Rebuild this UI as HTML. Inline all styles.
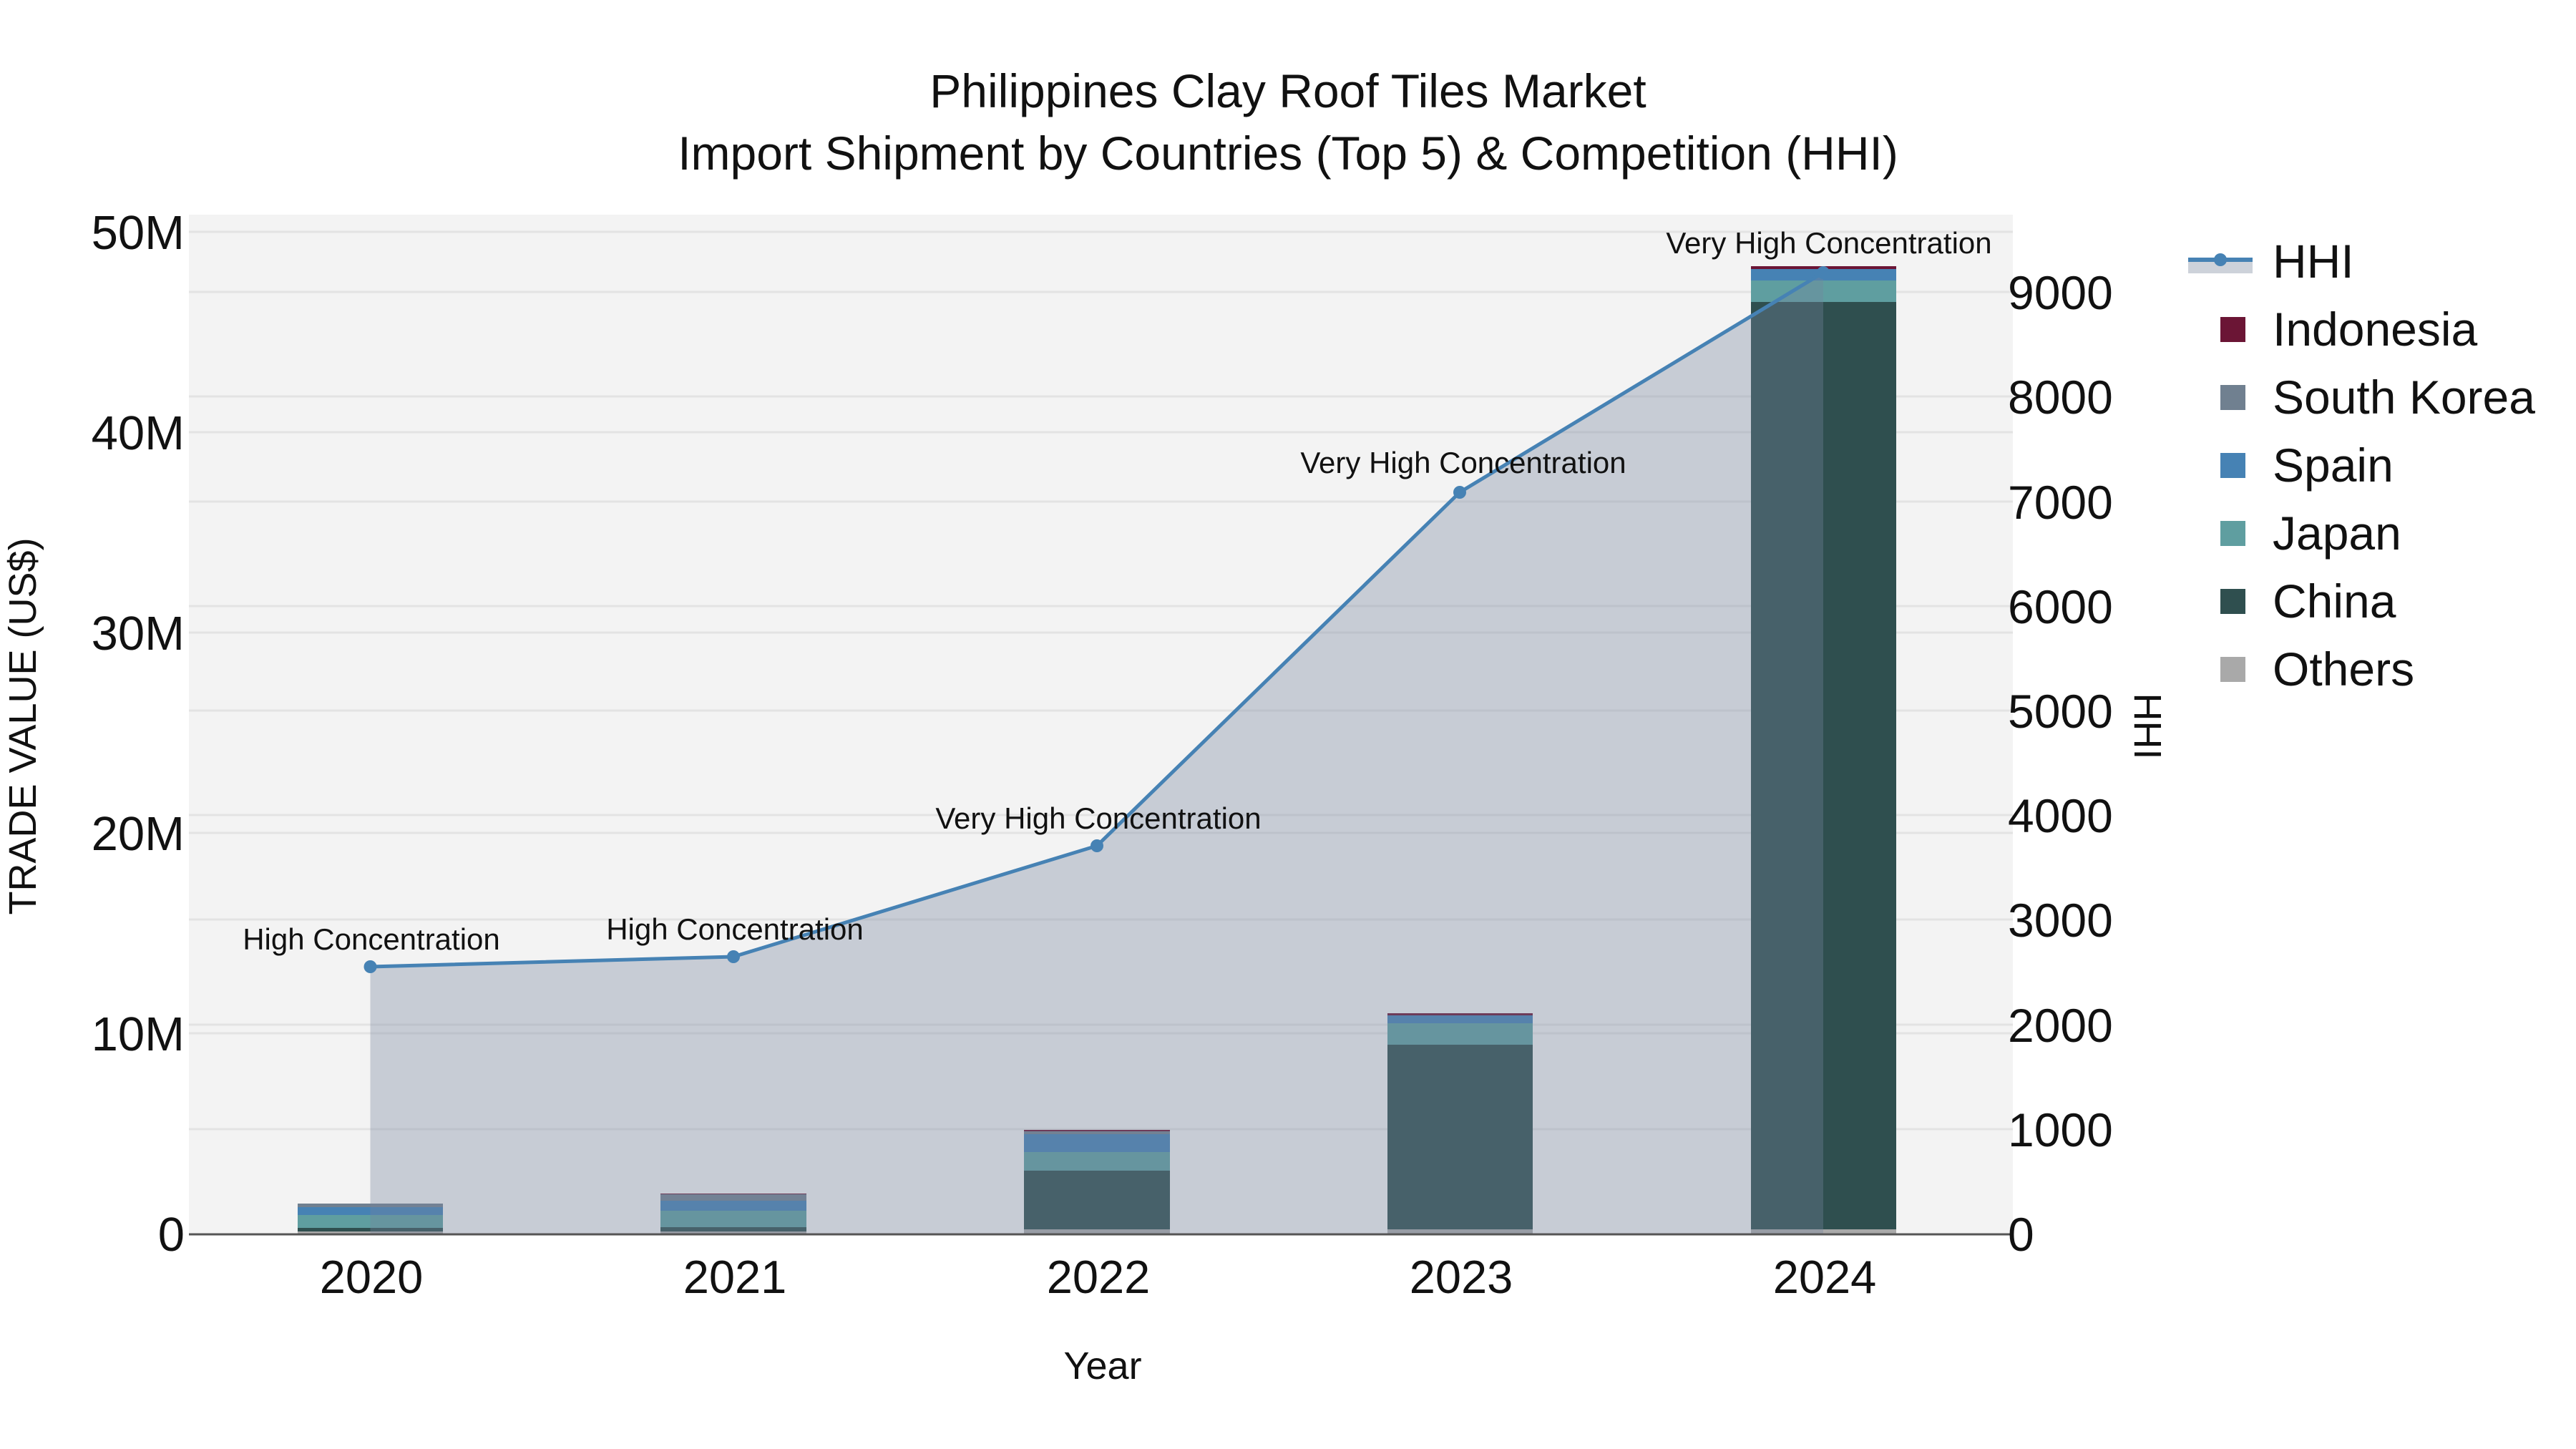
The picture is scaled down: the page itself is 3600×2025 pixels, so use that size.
<!DOCTYPE html>
<html><head><meta charset="utf-8"><style>html,body{margin:0;padding:0;background:#fff}svg{display:block}text{font-family:"Liberation Sans",sans-serif;fill:#111}</style></head>
<body>
<svg width="3600" height="2025" viewBox="0 0 3600 2025" xmlns="http://www.w3.org/2000/svg">
<rect width="3600" height="2025" fill="#fff"/>
<rect x="264" y="300" width="2549" height="1425" fill="#f3f3f3"/>
<g stroke="#e3e3e3" stroke-width="3">
<line x1="264" x2="2813" y1="1444" y2="1444"/><line x1="264" x2="2813" y1="1164" y2="1164"/><line x1="264" x2="2813" y1="884" y2="884"/><line x1="264" x2="2813" y1="604" y2="604"/><line x1="264" x2="2813" y1="324" y2="324"/>
<line x1="264" x2="2813" y1="1578" y2="1578"/><line x1="264" x2="2813" y1="1432" y2="1432"/><line x1="264" x2="2813" y1="1285" y2="1285"/><line x1="264" x2="2813" y1="1139" y2="1139"/><line x1="264" x2="2813" y1="993" y2="993"/><line x1="264" x2="2813" y1="847" y2="847"/><line x1="264" x2="2813" y1="701" y2="701"/><line x1="264" x2="2813" y1="554" y2="554"/><line x1="264" x2="2813" y1="408" y2="408"/>
</g>
<g>
<rect x="416" y="1682" width="203" height="5" fill="#708090"/>
<rect x="416" y="1687" width="203" height="11" fill="#4682b4"/>
<rect x="416" y="1698" width="203" height="18" fill="#5f9ea0"/>
<rect x="416" y="1716" width="203" height="5" fill="#2f4f4f"/>
<rect x="416" y="1721" width="203" height="4" fill="#a9a9a9"/>
<rect x="923" y="1668" width="204" height="1.5" fill="#6b1535"/>
<rect x="923" y="1669" width="204" height="9" fill="#708090"/>
<rect x="923" y="1678" width="204" height="14" fill="#4682b4"/>
<rect x="923" y="1692" width="204" height="23" fill="#5f9ea0"/>
<rect x="923" y="1715" width="204" height="6" fill="#2f4f4f"/>
<rect x="923" y="1721" width="204" height="4" fill="#a9a9a9"/>
<rect x="1431" y="1579" width="204" height="2" fill="#6b1535"/>
<rect x="1431" y="1581" width="204" height="4" fill="#708090"/>
<rect x="1431" y="1585" width="204" height="25" fill="#4682b4"/>
<rect x="1431" y="1610" width="204" height="26" fill="#5f9ea0"/>
<rect x="1431" y="1636" width="204" height="82" fill="#2f4f4f"/>
<rect x="1431" y="1718" width="204" height="7" fill="#a9a9a9"/>
<rect x="1939" y="1416" width="203" height="3" fill="#6b1535"/>
<rect x="1939" y="1419" width="203" height="11" fill="#4682b4"/>
<rect x="1939" y="1430" width="203" height="30" fill="#5f9ea0"/>
<rect x="1939" y="1460" width="203" height="258" fill="#2f4f4f"/>
<rect x="1939" y="1718" width="203" height="7" fill="#a9a9a9"/>
<rect x="2447" y="372" width="203" height="4" fill="#6b1535"/>
<rect x="2447" y="376" width="203" height="16" fill="#4682b4"/>
<rect x="2447" y="392" width="203" height="30" fill="#5f9ea0"/>
<rect x="2447" y="422" width="203" height="1296" fill="#2f4f4f"/>
<rect x="2447" y="1718" width="203" height="7" fill="#a9a9a9"/>
</g>
<polygon points="517.5,1351 1025,1337 1533,1182 2040,688 2548,381 2548,1724 517.5,1724" fill="rgb(118,133,158)" fill-opacity="0.35"/>
<line x1="264" x2="2813" y1="1725" y2="1725" stroke="#555" stroke-width="3"/>
<polyline points="517.5,1351 1025,1337 1533,1182 2040,688 2548,381" fill="none" stroke="#4682b4" stroke-width="5"/>
<g fill="#4682b4"><circle cx="517.5" cy="1351" r="9"/><circle cx="1025" cy="1337" r="9"/><circle cx="1533" cy="1182" r="9"/><circle cx="2040" cy="688" r="9"/><circle cx="2548" cy="381" r="9"/></g>
<g font-size="42" text-anchor="middle">
<text x="519" y="1327">High Concentration</text>
<text x="1027" y="1313">High Concentration</text>
<text x="1535" y="1158">Very High Concentration</text>
<text x="2045" y="661">Very High Concentration</text>
<text x="2556" y="354">Very High Concentration</text>
</g>
<g font-size="66" text-anchor="middle">
<text x="1800" y="150">Philippines Clay Roof Tiles Market</text>
<text x="1800" y="237">Import Shipment by Countries (Top 5) &amp; Competition (HHI)</text>
</g>
<g font-size="67" text-anchor="end">
<text x="258" y="348">50M</text><text x="258" y="628">40M</text><text x="258" y="908">30M</text><text x="258" y="1188">20M</text><text x="258" y="1468">10M</text><text x="258" y="1748">0</text>
</g>
<g font-size="66">
<text x="2806" y="432">9000</text><text x="2806" y="578">8000</text><text x="2806" y="725">7000</text><text x="2806" y="871">6000</text><text x="2806" y="1017">5000</text><text x="2806" y="1163">4000</text><text x="2806" y="1309">3000</text><text x="2806" y="1456">2000</text><text x="2806" y="1602">1000</text><text x="2806" y="1748">0</text>
</g>
<g font-size="65" text-anchor="middle">
<text x="519" y="1807">2020</text><text x="1027" y="1807">2021</text><text x="1535" y="1807">2022</text><text x="2042" y="1807">2023</text><text x="2550" y="1807">2024</text>
</g>
<text x="1541" y="1927" font-size="54" text-anchor="middle">Year</text>
<text transform="translate(50,1015) rotate(-90)" font-size="54" text-anchor="middle">TRADE VALUE (US$)</text>
<text transform="translate(2983,1015) rotate(90)" font-size="54" text-anchor="middle">HHI</text>
<rect x="3058" y="362" width="90" height="20" fill="#cdd2da"/>
<line x1="3058" x2="3148" y1="363" y2="363" stroke="#4682b4" stroke-width="6"/>
<circle cx="3103" cy="363" r="9" fill="#4682b4"/>
<rect x="3103" y="443" width="35" height="35" fill="#6b1535"/>
<rect x="3103" y="538" width="35" height="35" fill="#708090"/>
<rect x="3103" y="633" width="35" height="35" fill="#4682b4"/>
<rect x="3103" y="728" width="35" height="35" fill="#5f9ea0"/>
<rect x="3103" y="823" width="35" height="35" fill="#2f4f4f"/>
<rect x="3103" y="918" width="35" height="35" fill="#a9a9a9"/>
<g font-size="66">
<text x="3176" y="388">HHI</text><text x="3176" y="483">Indonesia</text><text x="3176" y="578">South Korea</text><text x="3176" y="673">Spain</text><text x="3176" y="768">Japan</text><text x="3176" y="863">China</text><text x="3176" y="958">Others</text>
</g>
</svg>
</body></html>
